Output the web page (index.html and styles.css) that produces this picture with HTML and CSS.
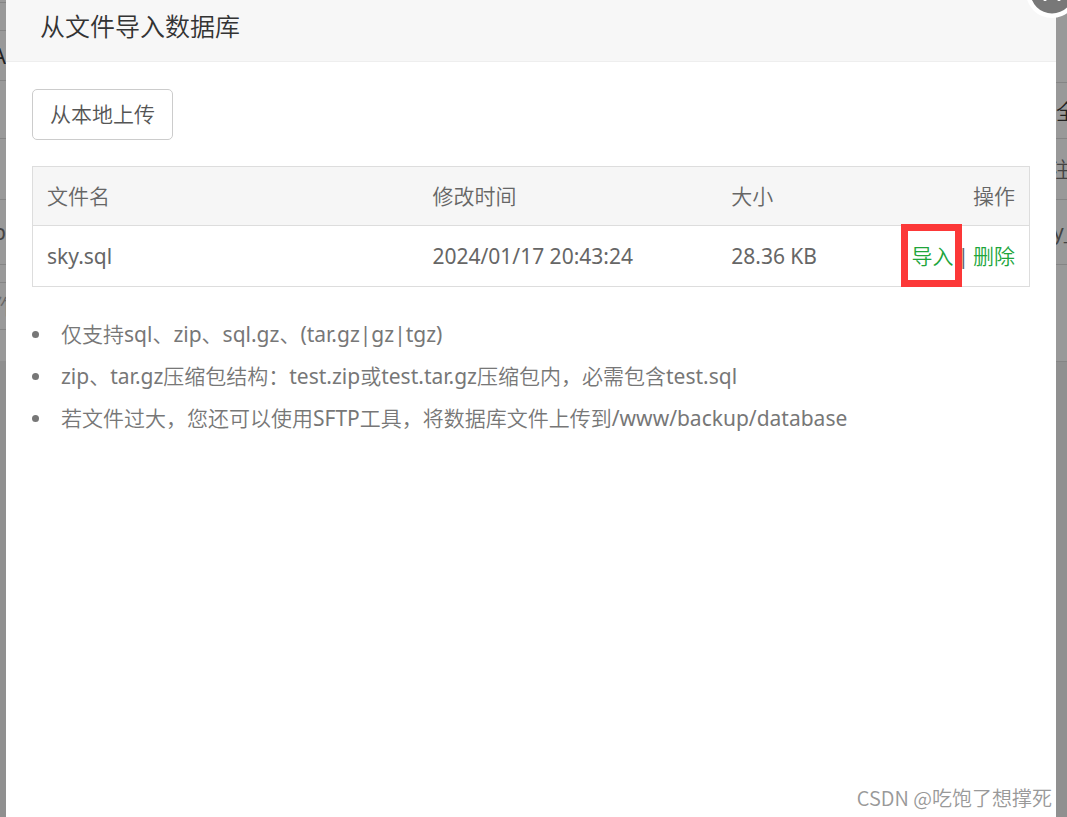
FILE: index.html
```html
<!DOCTYPE html>
<html lang="zh-CN">
<head>
    <meta charset="UTF-8">
    <meta name="viewport" content="width=device-width, initial-scale=1.0">
    <title>从文件导入数据库</title>
    <link rel="stylesheet" href="styles.css">
</head>
<body>
    <!-- 遮罩下的页面 -->
    <div class="shade shade-left">
        <div class="line h-top"></div>
        <div class="line h-gap"></div>
        <div class="line h-tab end dark">A</div>
        <div class="line h-bar"></div>
        <div class="line h-head"></div>
        <div class="line h-row end">p</div>
        <div class="line h-small"></div>
        <div class="line h-foot cut">作</div>
        <div class="h-last"></div>
    </div>

    <main class="dialog">
        <header class="dialog-header">
            <h1>从文件导入数据库</h1>
        </header>
        <div class="dialog-body">
            <button type="button" class="btn">从本地上传</button>
            <table class="files">
                <thead>
                    <tr>
                        <th class="col-name">文件名</th>
                        <th class="col-time">修改时间</th>
                        <th>大小</th>
                        <th class="actions">操作</th>
                    </tr>
                </thead>
                <tbody>
                    <tr>
                        <td>sky.sql</td>
                        <td>2024/01/17 20:43:24</td>
                        <td>28.36 KB</td>
                        <td class="actions"><a href="#" class="marked">导入</a><span class="sep">|</span><a href="#">删除</a></td>
                    </tr>
                </tbody>
            </table>
            <ul class="tips">
                <li>仅支持sql、zip、sql.gz、(tar.gz|gz|tgz)</li>
                <li>zip、tar.gz压缩包结构：test.zip或test.tar.gz压缩包内，必需包含test.sql</li>
                <li>若文件过大，您还可以使用SFTP工具，将数据库文件上传到/www/backup/database</li>
            </ul>
        </div>
        <footer class="credit">CSDN @吃饱了想撑死</footer>
        <button type="button" class="close" aria-label="关闭">
            <svg viewBox="0 0 54 54" width="54" height="54">
                <circle cx="27" cy="27" r="26" fill="#fff"/>
                <circle cx="27" cy="27" r="21.5" fill="#787878"/>
                <path d="M20 20L34 34M34 20L20 34" stroke="#fff" stroke-width="4" stroke-linecap="round"/>
            </svg>
        </button>
    </main>

    <div class="shade shade-right">
        <div class="line h-search"></div>
        <div class="line h-all dark">全</div>
        <div class="line h-head cut">注</div>
        <div class="line h-row cut-short">y_</div>
        <div class="line h-rest"></div>
        <div class="h-last"></div>
    </div>
</body>
</html>
```
FILE: styles.css
```css
* {
    box-sizing: border-box;
}

body {
    margin: 0;
    min-height: 100vh;
    display: grid;
    grid-template-columns: 6px minmax(0, 1fr) 11px;
    background-color: #999;
    color: #666;
    font-family: "Noto Sans", "Noto Sans CJK SC DemiLight", "Noto Sans CJK SC Light", "Noto Sans CJK SC", sans-serif;
    font-size: 21px;
    line-height: 30px;
}

/* 遮罩下的页面 */
.shade {
    display: flex;
    flex-direction: column;
    overflow: hidden;
    color: #444;
}

.line {
    display: flex;
    align-items: center;
    flex: none;
    border-bottom: 1px solid #858585;
    white-space: nowrap;
}

.dark { color: #222; }
.end { justify-content: flex-end; }
.cut { text-indent: -6px; }
.cut-short { text-indent: -3px; }

.h-top { height: 3px; }
.h-gap { height: 28px; }
.h-tab { height: 50px; }
.h-bar { height: 58px; }
.h-head { height: 61px; }
.h-row { height: 65px; }
.h-small { height: 18px; }
.h-foot { height: 47px; color: #666; }
.h-search { height: 83px; }
.h-all { height: 56px; }
.h-rest { height: 97px; }

.shade-left .h-foot {
    margin-bottom: 31px;
}

.h-last {
    flex: 1;
    background-color: #909090;
}

/* 弹窗 */
.dialog {
    position: relative;
    display: flex;
    flex-direction: column;
    background-color: #fff;
}

.dialog-header {
    padding: 0 34px 9px;
    background-color: #f7f7f7;
    border-bottom: 1px solid #eee;
}

.dialog-header h1 {
    margin: 0;
    font-size: 25px;
    line-height: 52px;
    font-weight: 400;
    color: #333;
}

.dialog-body {
    flex: 1;
    padding: 27px 26px;
}

.btn {
    display: block;
    padding: 0 17px;
    border: 1px solid #ccc;
    border-radius: 5px;
    background-color: #fff;
    color: #555;
    font: inherit;
    line-height: 49px;
}

.files {
    width: 100%;
    margin: 26px 0;
    border: 1px solid #ddd;
    border-collapse: separate;
    border-spacing: 0;
}

.files th,
.files td {
    padding: 14px;
    font-weight: 400;
    text-align: left;
    white-space: nowrap;
}

.files th {
    background-color: #f6f6f6;
    border-bottom: 1px solid #ddd;
}

.files td {
    padding: 15px 14px;
}

.files .actions {
    text-align: right;
}

.col-name { width: 38.7%; }
.col-time { width: 30%; }

.files a {
    color: #20a53a;
    text-decoration: none;
}

.sep {
    margin: 0 4px;
}

.marked {
    position: relative;
}

.marked::after {
    content: "";
    position: absolute;
    inset: -18px -9px -17px -10px;
    border: 7px solid #fc3838;
}

.tips {
    margin: 0;
    padding: 0;
    list-style: none;
    color: #777;
    line-height: 42px;
}

.tips li {
    display: flex;
    align-items: center;
    gap: 22px;
}

.tips li::before {
    content: "";
    flex: none;
    width: 7px;
    height: 7px;
    border-radius: 50%;
    background-color: #777;
}

.credit {
    padding: 0 4px 4px;
    font-family: "Noto Sans CJK SC DemiLight", "Noto Sans CJK SC Light", "Noto Sans CJK SC", sans-serif;
    font-size: 20px;
    text-align: right;
    color: #999;
}

.close {
    position: absolute;
    top: -35px;
    right: -23px;
    z-index: 1;
    padding: 0;
    border: 0;
    background: none;
}

.close svg {
    display: block;
}
```
